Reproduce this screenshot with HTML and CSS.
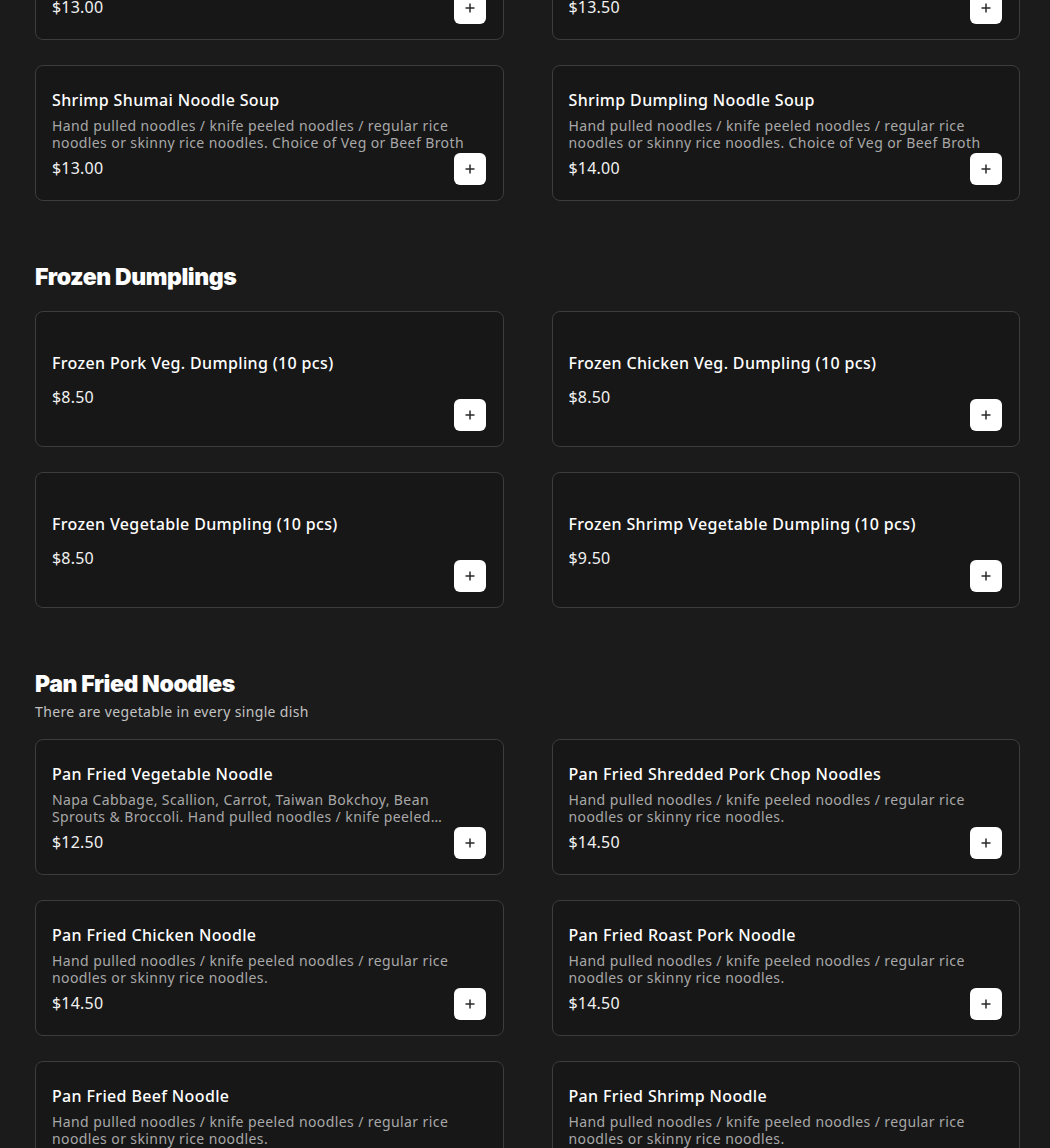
FILE: index.html
```html
<!DOCTYPE html>
<html lang="en">
<head>
    <meta charset="UTF-8">
    <meta name="viewport" content="width=device-width, initial-scale=1.0">
    <title>Menu</title>
    <link rel="stylesheet" href="styles.css">
</head>
<body>
    <main class="menu">

        <section class="menu-section">
            <div class="section-head">
                <h2 class="section-title">Noodle Soup</h2>
            </div>
            <div class="item-grid">
                <div class="item-card">
                    <div class="item-info">
                        <h3 class="item-name">Beef Brisket Noodle Soup</h3>
                        <p class="item-desc">Hand pulled noodles / knife peeled noodles / regular rice noodles or skinny rice noodles. Choice of Veg or Beef Broth</p>
                        <div class="item-price">$13.00</div>
                    </div>
                    <button class="add-btn" aria-label="Add">
                        <svg width="10" height="10" viewBox="0 0 10 10"><path d="M5 0.5v9M0.5 5h9" stroke="#2a2a2a" stroke-width="1.5"/></svg>
                    </button>
                </div>
                <div class="item-card">
                    <div class="item-info">
                        <h3 class="item-name">Seafood Noodle Soup</h3>
                        <p class="item-desc">Hand pulled noodles / knife peeled noodles / regular rice noodles or skinny rice noodles. Choice of Veg or Beef Broth</p>
                        <div class="item-price">$13.50</div>
                    </div>
                    <button class="add-btn" aria-label="Add">
                        <svg width="10" height="10" viewBox="0 0 10 10"><path d="M5 0.5v9M0.5 5h9" stroke="#2a2a2a" stroke-width="1.5"/></svg>
                    </button>
                </div>
                <div class="item-card">
                    <div class="item-info">
                        <h3 class="item-name">Shrimp Shumai Noodle Soup</h3>
                        <p class="item-desc">Hand pulled noodles / knife peeled noodles / regular rice noodles or skinny rice noodles. Choice of Veg or Beef Broth</p>
                        <div class="item-price">$13.00</div>
                    </div>
                    <button class="add-btn" aria-label="Add">
                        <svg width="10" height="10" viewBox="0 0 10 10"><path d="M5 0.5v9M0.5 5h9" stroke="#2a2a2a" stroke-width="1.5"/></svg>
                    </button>
                </div>
                <div class="item-card">
                    <div class="item-info">
                        <h3 class="item-name">Shrimp Dumpling Noodle Soup</h3>
                        <p class="item-desc">Hand pulled noodles / knife peeled noodles / regular rice noodles or skinny rice noodles. Choice of Veg or Beef Broth</p>
                        <div class="item-price">$14.00</div>
                    </div>
                    <button class="add-btn" aria-label="Add">
                        <svg width="10" height="10" viewBox="0 0 10 10"><path d="M5 0.5v9M0.5 5h9" stroke="#2a2a2a" stroke-width="1.5"/></svg>
                    </button>
                </div>
            </div>
        </section>

        <section class="menu-section">
            <div class="section-head">
                <h2 class="section-title">Frozen Dumplings</h2>
            </div>
            <div class="item-grid">
                <div class="item-card">
                    <div class="item-info">
                        <h3 class="item-name">Frozen Pork Veg. Dumpling (10 pcs)</h3>
                        <p class="item-desc"></p>
                        <div class="item-price">$8.50</div>
                    </div>
                    <button class="add-btn" aria-label="Add">
                        <svg width="10" height="10" viewBox="0 0 10 10"><path d="M5 0.5v9M0.5 5h9" stroke="#2a2a2a" stroke-width="1.5"/></svg>
                    </button>
                </div>
                <div class="item-card">
                    <div class="item-info">
                        <h3 class="item-name">Frozen Chicken Veg. Dumpling (10 pcs)</h3>
                        <p class="item-desc"></p>
                        <div class="item-price">$8.50</div>
                    </div>
                    <button class="add-btn" aria-label="Add">
                        <svg width="10" height="10" viewBox="0 0 10 10"><path d="M5 0.5v9M0.5 5h9" stroke="#2a2a2a" stroke-width="1.5"/></svg>
                    </button>
                </div>
                <div class="item-card">
                    <div class="item-info">
                        <h3 class="item-name">Frozen Vegetable Dumpling (10 pcs)</h3>
                        <p class="item-desc"></p>
                        <div class="item-price">$8.50</div>
                    </div>
                    <button class="add-btn" aria-label="Add">
                        <svg width="10" height="10" viewBox="0 0 10 10"><path d="M5 0.5v9M0.5 5h9" stroke="#2a2a2a" stroke-width="1.5"/></svg>
                    </button>
                </div>
                <div class="item-card">
                    <div class="item-info">
                        <h3 class="item-name">Frozen Shrimp Vegetable Dumpling (10 pcs)</h3>
                        <p class="item-desc"></p>
                        <div class="item-price">$9.50</div>
                    </div>
                    <button class="add-btn" aria-label="Add">
                        <svg width="10" height="10" viewBox="0 0 10 10"><path d="M5 0.5v9M0.5 5h9" stroke="#2a2a2a" stroke-width="1.5"/></svg>
                    </button>
                </div>
            </div>
        </section>

        <section class="menu-section">
            <div class="section-head">
                <h2 class="section-title">Pan Fried Noodles</h2>
                <p class="section-note">There are vegetable in every single dish</p>
            </div>
            <div class="item-grid">
                <div class="item-card">
                    <div class="item-info">
                        <h3 class="item-name">Pan Fried Vegetable Noodle</h3>
                        <p class="item-desc">Napa Cabbage, Scallion, Carrot, Taiwan Bokchoy, Bean Sprouts &amp; Broccoli. Hand pulled noodles / knife peeled noodles / regular rice noodles or skinny rice noodles.</p>
                        <div class="item-price">$12.50</div>
                    </div>
                    <button class="add-btn" aria-label="Add">
                        <svg width="10" height="10" viewBox="0 0 10 10"><path d="M5 0.5v9M0.5 5h9" stroke="#2a2a2a" stroke-width="1.5"/></svg>
                    </button>
                </div>
                <div class="item-card">
                    <div class="item-info">
                        <h3 class="item-name">Pan Fried Shredded Pork Chop Noodles</h3>
                        <p class="item-desc">Hand pulled noodles / knife peeled noodles / regular rice noodles or skinny rice noodles.</p>
                        <div class="item-price">$14.50</div>
                    </div>
                    <button class="add-btn" aria-label="Add">
                        <svg width="10" height="10" viewBox="0 0 10 10"><path d="M5 0.5v9M0.5 5h9" stroke="#2a2a2a" stroke-width="1.5"/></svg>
                    </button>
                </div>
                <div class="item-card">
                    <div class="item-info">
                        <h3 class="item-name">Pan Fried Chicken Noodle</h3>
                        <p class="item-desc">Hand pulled noodles / knife peeled noodles / regular rice noodles or skinny rice noodles.</p>
                        <div class="item-price">$14.50</div>
                    </div>
                    <button class="add-btn" aria-label="Add">
                        <svg width="10" height="10" viewBox="0 0 10 10"><path d="M5 0.5v9M0.5 5h9" stroke="#2a2a2a" stroke-width="1.5"/></svg>
                    </button>
                </div>
                <div class="item-card">
                    <div class="item-info">
                        <h3 class="item-name">Pan Fried Roast Pork Noodle</h3>
                        <p class="item-desc">Hand pulled noodles / knife peeled noodles / regular rice noodles or skinny rice noodles.</p>
                        <div class="item-price">$14.50</div>
                    </div>
                    <button class="add-btn" aria-label="Add">
                        <svg width="10" height="10" viewBox="0 0 10 10"><path d="M5 0.5v9M0.5 5h9" stroke="#2a2a2a" stroke-width="1.5"/></svg>
                    </button>
                </div>
                <div class="item-card">
                    <div class="item-info">
                        <h3 class="item-name">Pan Fried Beef Noodle</h3>
                        <p class="item-desc">Hand pulled noodles / knife peeled noodles / regular rice noodles or skinny rice noodles.</p>
                        <div class="item-price">$15.50</div>
                    </div>
                    <button class="add-btn" aria-label="Add">
                        <svg width="10" height="10" viewBox="0 0 10 10"><path d="M5 0.5v9M0.5 5h9" stroke="#2a2a2a" stroke-width="1.5"/></svg>
                    </button>
                </div>
                <div class="item-card">
                    <div class="item-info">
                        <h3 class="item-name">Pan Fried Shrimp Noodle</h3>
                        <p class="item-desc">Hand pulled noodles / knife peeled noodles / regular rice noodles or skinny rice noodles.</p>
                        <div class="item-price">$15.50</div>
                    </div>
                    <button class="add-btn" aria-label="Add">
                        <svg width="10" height="10" viewBox="0 0 10 10"><path d="M5 0.5v9M0.5 5h9" stroke="#2a2a2a" stroke-width="1.5"/></svg>
                    </button>
                </div>
            </div>
        </section>

    </main>
</body>
</html>
```

FILE: styles.css
```css
body {
    margin: 0;
    font-family: "Noto Sans", "Open Sans", sans-serif;
    background-color: #1b1b1b;
    color: #fff;
}

/* page is shown scrolled part way down */
.menu {
    margin-top: -147px;
    padding: 0 30px 40px 35px;
}

.menu-section + .menu-section {
    margin-top: 59px;
}

.section-head {
    margin-bottom: 19px;
}

.section-title {
    font-family: Inter, "Noto Sans", sans-serif;
    font-size: 23px;
    font-weight: 900;
    line-height: 30px;
    letter-spacing: -0.4px;
    padding-top: 2px;
    margin: 0;
}

.section-note {
    font-size: 14px;
    line-height: 20px;
    letter-spacing: 0.35px;
    color: #c2c2c2;
    margin: 3px 0 -2px;
}

.item-grid {
    display: grid;
    grid-template-columns: 1fr 1fr;
    column-gap: 48px;
    row-gap: 25px;
}

.item-card {
    display: grid;
    height: 136px;
    box-sizing: border-box;
    padding: 16px;
    background-color: #171717;
    border: 1px solid #3d3d3d;
    border-radius: 8px;
}

.item-info {
    grid-area: 1 / 1;
    align-self: center;
    padding: 2px 16px 0 0;
    min-width: 0;
}

.item-name {
    font-size: 16px;
    font-weight: 500;
    line-height: 20px;
    letter-spacing: 0.35px;
    margin: 0;
}

.item-desc {
    font-size: 14px;
    line-height: 17px;
    letter-spacing: 0.4px;
    color: #a8a8a8;
    margin: 7px 0 4px;
    padding-bottom: 3px;
    display: -webkit-box;
    -webkit-line-clamp: 2;
    -webkit-box-orient: vertical;
    overflow: hidden;
}

.item-desc:empty {
    padding-bottom: 0;
    margin-bottom: 7px;
}

.item-price {
    font-size: 16px;
    font-weight: 400;
    line-height: 20px;
    letter-spacing: 0.2px;
    color: #f2f2f2;
}

.add-btn {
    grid-area: 1 / 1;
    justify-self: end;
    align-self: end;
    width: 32px;
    height: 32px;
    margin: 0 1px -1px 0;
    padding: 0;
    border: none;
    border-radius: 6px;
    background-color: #fff;
    display: flex;
    align-items: center;
    justify-content: center;
    cursor: pointer;
}
```
